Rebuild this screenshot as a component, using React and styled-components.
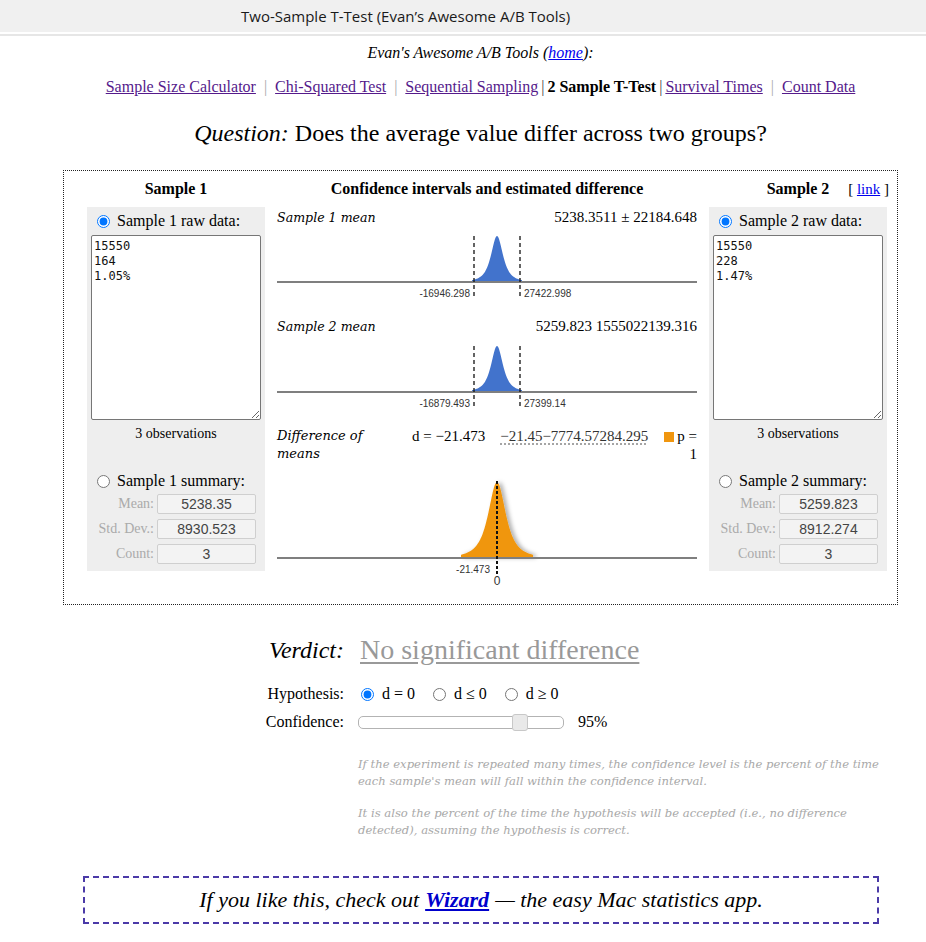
import React from 'react';
import styled, { createGlobalStyle } from 'styled-components';

const GlobalStyle = createGlobalStyle`
  html, body {
    margin: 0;
    padding: 0;
    background: #fff;
  }
  body {
    font-family: "Liberation Serif", "Times New Roman", serif;
    color: #000;
  }
`;

// Browser-like title strip
const TopBar = styled.div`
  height: 32px;
  background: #f0f0f0;
  border-bottom: 2px solid #fff;
  display: flex;
  align-items: center;
  padding-left: 241px;
  font-family: "Open Sans", "Noto Sans", sans-serif;
  font-size: 15px;
  color: #1a1a1a;
`;

const Rule = styled.div`
  height: 2px;
  background: #e6e6e6;
`;

const Page = styled.div`
  width: 835px;
  margin-left: 63px;
  text-align: center;
`;

const Crumb = styled.div`
  margin-top: 8px;
  font-size: 16px;
  line-height: 18px;
  font-style: italic;

  a {
    color: #0000ee;
  }
`;

const Nav = styled.nav`
  margin-top: 15px;
  font-size: 16px;
  line-height: 20px;
`;

const NavLink = styled.a`
  color: #551a8b;
  text-decoration: underline;
`;

const Sep = styled.span`
  color: ${(p) => (p.$dark ? '#444' : '#aaa')};
  margin: 0 ${(p) => (p.$dark ? '3px' : '8px')};
`;

const Question = styled.h1`
  margin: 22px 0 0;
  font-size: 24px;
  line-height: 28px;
  font-weight: normal;

  em {
    font-style: italic;
  }
`;

// Main dotted box with three columns
const Box = styled.div`
  margin-top: 23px;
  border: 1px dotted #222;
  padding: 8px 10px 14px 23px;
  display: grid;
  grid-template-columns: 178px 420px 178px;
  column-gap: 12px;
  align-items: start;
  text-align: left;
`;

const ColHead = styled.div`
  position: relative;
  font-weight: bold;
  font-size: 16px;
  line-height: 20px;
  text-align: center;
  margin-bottom: 8px;
`;

const LinkTag = styled.span`
  position: absolute;
  right: -2px;
  top: 0;
  font-weight: normal;
  font-size: 15px;

  a {
    color: #0000ee;
  }
`;

const SidePanel = styled.div`
  background: #eeeeee;
  padding: 4px 4px 7px;
  display: flex;
  flex-direction: column;
`;

const RadioRow = styled.label`
  display: flex;
  align-items: center;
  height: 20px;
  font-size: 16px;
  line-height: 20px;
  margin-top: ${(p) => p.$gap || 0}px;

  input {
    margin: 0 7px 0 6px;
    width: 13px;
    height: 13px;
  }
`;

const DataArea = styled.textarea`
  margin-top: 4px;
  width: 170px;
  height: 185px;
  box-sizing: border-box;
  border: 1px solid #767676;
  border-radius: 2px;
  padding: 3px 2px;
  font-family: "DejaVu Sans Mono", "Liberation Mono", monospace;
  font-size: 12px;
  line-height: 15px;
  color: #111;
  background: #fff;
  resize: vertical;
`;

const Obs = styled.div`
  margin-top: 5px;
  font-size: 14px;
  line-height: 18px;
  text-align: center;
`;

const SummaryGrid = styled.div`
  margin-top: 3px;
  display: grid;
  grid-template-columns: 63px 99px;
  column-gap: 3px;
  row-gap: 5px;
`;

const FieldLabel = styled.span`
  color: #aaa;
  text-align: right;
  font-size: 14px;
  line-height: 20px;
`;

const Field = styled.input`
  height: 20px;
  box-sizing: border-box;
  border: 1px solid #cfcfcf;
  border-radius: 2px;
  background: #f3f3f3;
  font-family: "Liberation Sans", Arial, sans-serif;
  font-size: 14px;
  color: #444;
  text-align: center;
  padding: 0;
`;

const Middle = styled.div`
  display: flex;
  flex-direction: column;
`;

const ChartHead = styled.div`
  display: flex;
  justify-content: space-between;
  align-items: baseline;
  height: 20px;
  line-height: 20px;
  margin-top: ${(p) => p.$gap || 0}px;
`;

const ItalicLabel = styled.span`
  font-family: "DejaVu Serif", Georgia, serif;
  font-style: italic;
  font-size: 12.6px;
`;

const Value = styled.span`
  font-size: 15px;
`;

const ChartSvg = styled.svg`
  display: block;
  margin-top: ${(p) => p.$gap || 0}px;
  overflow: visible;
`;

const DiffHead = styled.div`
  display: flex;
  align-items: flex-start;
  line-height: 18px;
  margin-top: 17px;
`;

const DiffLabel = styled(ItalicLabel)`
  flex: 0 0 110px;
  margin-right: 25px;
  font-size: 13px;
`;

const CiValue = styled.span`
  margin-left: 15px;
  font-size: 15px;
  color: #333;
  text-decoration: underline dotted #888;
  text-underline-offset: 3px;
`;

const PBlock = styled.span`
  margin-left: auto;
  width: 36px;
  text-align: right;
  font-size: 15px;
`;

const Swatch = styled.span`
  display: inline-block;
  width: 10px;
  height: 10px;
  background: #f0960f;
  margin-right: 3px;
  vertical-align: -1px;
`;

// Controls under the box
const CtrlRow = styled.div`
  display: grid;
  grid-template-columns: 281px 1fr;
  column-gap: 14px;
  align-items: center;
  text-align: left;
  margin-top: ${(p) => p.$gap || 0}px;
  min-height: ${(p) => p.$h || 22}px;
`;

const CtrlLabel = styled.span`
  text-align: right;
  font-size: ${(p) => p.$size || 16}px;
  font-style: ${(p) => (p.$italic ? 'italic' : 'normal')};
`;

const Verdict = styled.span`
  margin-left: 2px;
  font-size: 28px;
  color: #999;
  text-decoration: underline;
  text-underline-offset: 3px;
`;

const Options = styled.div`
  display: flex;
  align-items: center;
  font-size: 16px;

  label {
    display: flex;
    align-items: center;
    margin-right: 15px;
  }

  input {
    margin: 0 8px 0 3px;
    width: 13px;
    height: 13px;
  }
`;

const SliderWrap = styled.div`
  display: flex;
  align-items: center;
  font-size: 16px;
  gap: 14px;
`;

const Range = styled.input`
  -webkit-appearance: none;
  appearance: none;
  width: 206px;
  height: 17px;
  margin: 0;
  background: transparent;

  &::-webkit-slider-runnable-track {
    height: 13px;
    box-sizing: border-box;
    border: 1px solid #b3b3b3;
    border-radius: 5px;
    background: #fff;
  }

  &::-webkit-slider-thumb {
    -webkit-appearance: none;
    width: 16px;
    height: 17px;
    margin-top: -3px;
    background: #e9e9e9;
    border: 1px solid #c8c8c8;
    border-radius: 3px;
  }
`;

const Note = styled.p`
  margin: ${(p) => p.$gap || 0}px 0 0 295px;
  text-align: left;
  font-family: "DejaVu Serif", Georgia, serif;
  font-style: italic;
  font-size: 11.6px;
  line-height: 17px;
  color: #a8a8a8;
  white-space: nowrap;
`;

const Banner = styled.div`
  margin: 37px 0 0 20px;
  width: 796px;
  height: 48px;
  box-sizing: border-box;
  border: 2px dashed #4b3aa8;
  display: flex;
  align-items: center;
  justify-content: center;
  font-size: 22px;
  font-style: italic;

  a {
    color: #0000cc;
    font-weight: bold;
    margin: 0 6px;
  }
`;

// t-distribution (df = 2) outline for the charts
const curvePath = (cx, base, height, scale, half) => {
  let d = `M ${cx - half} ${base}`;
  for (let x = -half; x <= half; x += 0.5) {
    const t = x / scale;
    const y = base - height * Math.pow(1 + (t * t) / 2, -1.5);
    d += ` L ${(cx + x).toFixed(1)} ${y.toFixed(2)}`;
  }
  return `${d} L ${cx + half} ${base} Z`;
};

const labelFont = { fontFamily: '"Liberation Sans", Arial, sans-serif', fontSize: 10, fill: '#333' };

const MeanChart = ({ lo, hi, gap }) => (
  <ChartSvg $gap={gap} width="420" height="72" viewBox="0 0 420 72">
    <path d={curvePath(220, 54, 46, 6.5, 25)} fill="#4273cc" />
    <line x1="0" y1="54" x2="420" y2="54" stroke="#7f7f7f" strokeWidth="2" />
    <line x1="197" y1="8" x2="197" y2="70" stroke="#111" strokeWidth="1.3" strokeDasharray="4 3" />
    <line x1="243" y1="8" x2="243" y2="70" stroke="#111" strokeWidth="1.3" strokeDasharray="4 3" />
    <text x="193" y="69" textAnchor="end" style={labelFont}>{lo}</text>
    <text x="247" y="69" style={labelFont}>{hi}</text>
  </ChartSvg>
);

const DiffChart = () => (
  <ChartSvg $gap={2} width="420" height="125" viewBox="0 0 420 125">
    <defs>
      <filter id="soft" x="-50%" y="-20%" width="200%" height="140%">
        <feDropShadow dx="3" dy="0" stdDeviation="2" floodColor="#000" floodOpacity="0.3" />
      </filter>
    </defs>
    <path d={curvePath(220, 93, 76, 9.5, 36)} fill="#f0960f" filter="url(#soft)" />
    <line x1="0" y1="93" x2="420" y2="93" stroke="#7f7f7f" strokeWidth="2" />
    <line x1="220" y1="16" x2="220" y2="111" stroke="#111" strokeWidth="2" strokeDasharray="3 2" />
    <text x="213" y="108" textAnchor="end" style={labelFont}>-21.473</text>
    <text x="220" y="120" textAnchor="middle" style={{ ...labelFont, fontSize: 12 }}>0</text>
  </ChartSvg>
);

const Sample = ({ n, data, mean, sd }) => (
  <SidePanel>
    <RadioRow>
      <input type="radio" name={`mode${n}`} defaultChecked />
      Sample {n} raw data:
    </RadioRow>
    <DataArea defaultValue={data} spellCheck={false} />
    <Obs>3 observations</Obs>
    <RadioRow $gap={28}>
      <input type="radio" name={`mode${n}`} />
      Sample {n} summary:
    </RadioRow>
    <SummaryGrid>
      <FieldLabel>Mean:</FieldLabel>
      <Field readOnly value={mean} />
      <FieldLabel>Std. Dev.:</FieldLabel>
      <Field readOnly value={sd} />
      <FieldLabel>Count:</FieldLabel>
      <Field readOnly value="3" />
    </SummaryGrid>
  </SidePanel>
);

const App = () => (
  <>
    <GlobalStyle />
    <TopBar>Two-Sample T-Test (Evan’s Awesome A/B Tools)</TopBar>
    <Rule />
    <Page>
      <Crumb>
        Evan's Awesome A/B Tools (<a href="#home">home</a>):
      </Crumb>
      <Nav>
        <NavLink href="#ss">Sample Size Calculator</NavLink>
        <Sep>|</Sep>
        <NavLink href="#chi">Chi-Squared Test</NavLink>
        <Sep>|</Sep>
        <NavLink href="#seq">Sequential Sampling</NavLink>
        <Sep $dark>|</Sep>
        <b>2 Sample T-Test</b>
        <Sep $dark>|</Sep>
        <NavLink href="#surv">Survival Times</NavLink>
        <Sep>|</Sep>
        <NavLink href="#count">Count Data</NavLink>
      </Nav>
      <Question>
        <em>Question:</em> Does the average value differ across two groups?
      </Question>

      <Box>
        <ColHead>Sample 1</ColHead>
        <ColHead>Confidence intervals and estimated difference</ColHead>
        <ColHead>
          Sample 2
          <LinkTag>
            [ <a href="#link">link</a> ]
          </LinkTag>
        </ColHead>

        <Sample n={1} data={'15550\n164\n1.05%'} mean="5238.35" sd="8930.523" />

        <Middle>
          <ChartHead>
            <ItalicLabel>Sample 1 mean</ItalicLabel>
            <Value>5238.3511 ± 22184.648</Value>
          </ChartHead>
          <MeanChart gap={1} lo="-16946.298" hi="27422.998" />
          <ChartHead $gap={16}>
            <ItalicLabel>Sample 2 mean</ItalicLabel>
            <Value>5259.823 1555022139.316</Value>
          </ChartHead>
          <MeanChart gap={2} lo="-16879.493" hi="27399.14" />
          <DiffHead>
            <DiffLabel>Difference of means</DiffLabel>
            <Value>d = −21.473</Value>
            <CiValue>−21.45−7774.57284.295</CiValue>
            <PBlock>
              <Swatch />p = 1
            </PBlock>
          </DiffHead>
          <DiffChart />
        </Middle>

        <Sample n={2} data={'15550\n228\n1.47%'} mean="5259.823" sd="8912.274" />
      </Box>

      <CtrlRow $gap={29} $h={32}>
        <CtrlLabel $size={24} $italic>Verdict:</CtrlLabel>
        <span>
          <Verdict>No significant difference</Verdict>
        </span>
      </CtrlRow>
      <CtrlRow $gap={17}>
        <CtrlLabel>Hypothesis:</CtrlLabel>
        <Options>
          <label>
            <input type="radio" name="hyp" defaultChecked />d = 0
          </label>
          <label>
            <input type="radio" name="hyp" />d ≤ 0
          </label>
          <label>
            <input type="radio" name="hyp" />d ≥ 0
          </label>
        </Options>
      </CtrlRow>
      <CtrlRow $gap={6}>
        <CtrlLabel>Confidence:</CtrlLabel>
        <SliderWrap>
          <Range type="range" min="75" max="99.5" step="0.5" defaultValue="95" />
          <span>95%</span>
        </SliderWrap>
      </CtrlRow>

      <Note $gap={23}>
        If the experiment is repeated many times, the confidence level is the percent of the time
        <br />
        each sample's mean will fall within the confidence interval.
      </Note>
      <Note $gap={15}>
        It is also the percent of the time the hypothesis will be accepted (i.e., no difference
        <br />
        detected), assuming the hypothesis is correct.
      </Note>

      <Banner>
        If you like this, check out<a href="#wizard">Wizard</a>— the easy Mac statistics app.
      </Banner>
    </Page>
  </>
);

export default App;
